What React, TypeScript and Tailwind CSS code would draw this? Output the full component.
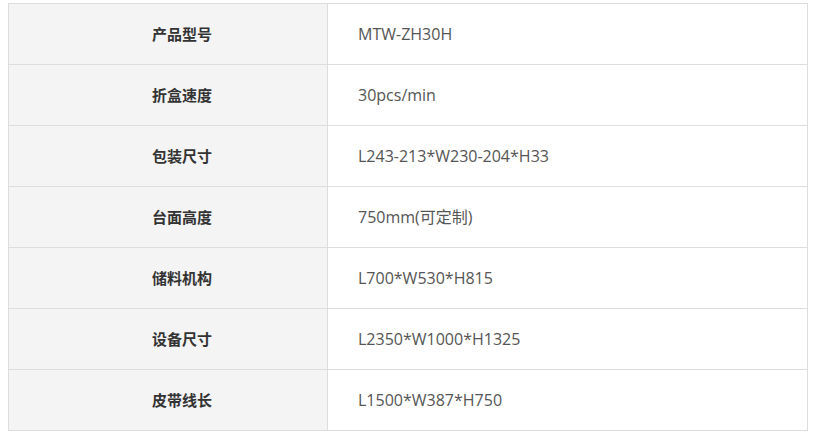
const rows = [
  { label: "产品型号", value: "MTW-ZH30H" },
  { label: "折盒速度", value: "30pcs/min" },
  { label: "包装尺寸", value: "L243-213*W230-204*H33" },
  { label: "台面高度", value: "750mm(可定制)" },
  { label: "储料机构", value: "L700*W530*H815" },
  { label: "设备尺寸", value: "L2350*W1000*H1325" },
  { label: "皮带线长", value: "L1500*W387*H750" },
];

export default function App() {
  return (
    <div
      className="w-[814px] h-[438px] bg-white pt-[3px] pl-[8px]"
      style={{ fontFamily: '"Microsoft YaHei", "Noto Sans CJK SC", "Noto Sans", sans-serif' }}
    >
      <div className="w-[800px] border-l border-t border-[#dddddd]">
        {rows.map((r) => (
          <div key={r.label} className="flex h-[61px] border-b border-[#dddddd]">
            <div className="w-[319px] shrink-0 bg-[#f4f4f4] border-r border-[#dddddd] flex items-center justify-center pl-[28px] text-[15px] font-bold text-[#333333]">
              {r.label}
            </div>
            <div className="flex-1 border-r border-[#dddddd] flex items-center pl-[30px] text-[16px] text-[#555555] font-['Open_Sans','Noto_Sans_CJK_SC',sans-serif]">
              {r.value}
            </div>
          </div>
        ))}
      </div>
    </div>
  );
}
